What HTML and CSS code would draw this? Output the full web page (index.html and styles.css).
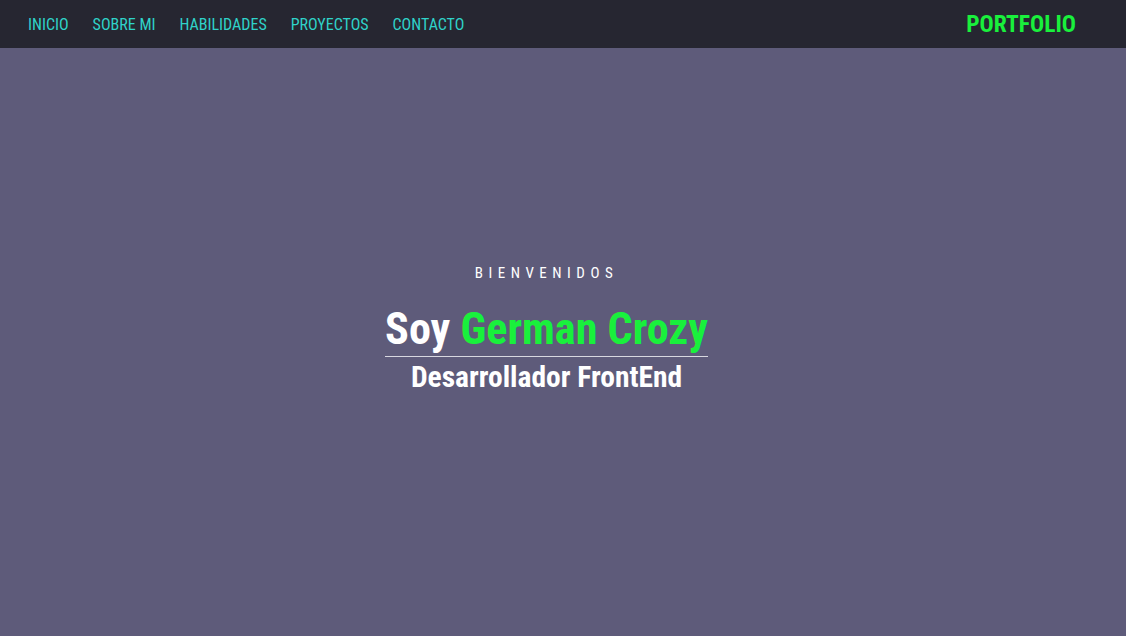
FILE: index.html
```html
<!DOCTYPE html>
<html lang="es">
<head>
<meta charset="utf-8">
<title>Portfolio</title>
<link rel="stylesheet" href="styles.css">
</head>
<body>
<header class="header">
  <nav class="nav">
    <a class="nav-link" href="#">INICIO</a>
    <a class="nav-link" href="#">SOBRE MI</a>
    <a class="nav-link" href="#">HABILIDADES</a>
    <a class="nav-link" href="#">PROYECTOS</a>
    <a class="nav-link" href="#">CONTACTO</a>
  </nav>
  <div class="logo">PORTFOLIO</div>
</header>
<main class="hero">
  <div class="hero-inner">
    <p class="welcome">BIENVENIDOS</p>
    <h1 class="title">Soy <span class="name">German Crozy</span></h1>
    <h2 class="subtitle">Desarrollador FrontEnd</h2>
  </div>
</main>
</body>
</html>
```
FILE: styles.css
```css
* { box-sizing: border-box; }
html, body { margin: 0; padding: 0; height: 100%; }
body {
  font-family: Roboto, "Liberation Sans", sans-serif;
  font-stretch: condensed;
  background: #5e5b7a;
  display: flex;
  flex-direction: column;
}
.header {
  height: 48px;
  background: #262631;
  display: flex;
  align-items: center;
  justify-content: space-between;
  padding: 0 50px 0 28px;
  flex: none;
}
.nav { display: flex; gap: 24px; }
.nav-link {
  color: #2fd3c9;
  text-decoration: none;
  font-size: 16px;
  font-weight: 400;
}
.logo {
  color: #19f03c;
  font-size: 23.5px;
  font-weight: 700;
}
.hero {
  flex: 1;
  display: flex;
  align-items: center;
  justify-content: center;
  padding: 0 33px 24px 0;
}
.hero-inner {
  display: flex;
  flex-direction: column;
  align-items: center;
}
.welcome {
  margin: 0 0 20px;
  color: #fff;
  font-size: 15px;
  line-height: 18px;
  letter-spacing: 5.5px;
}
.title {
  margin: 0;
  color: #fff;
  font-size: 44.2px;
  font-weight: 700;
  line-height: 54px;
  border-bottom: 1px solid #d8d8e0;
}
.name { color: #19f03c; }
.subtitle {
  margin: 0;
  color: #fff;
  font-size: 29.5px;
  font-weight: 700;
  line-height: 40px;
}
```
